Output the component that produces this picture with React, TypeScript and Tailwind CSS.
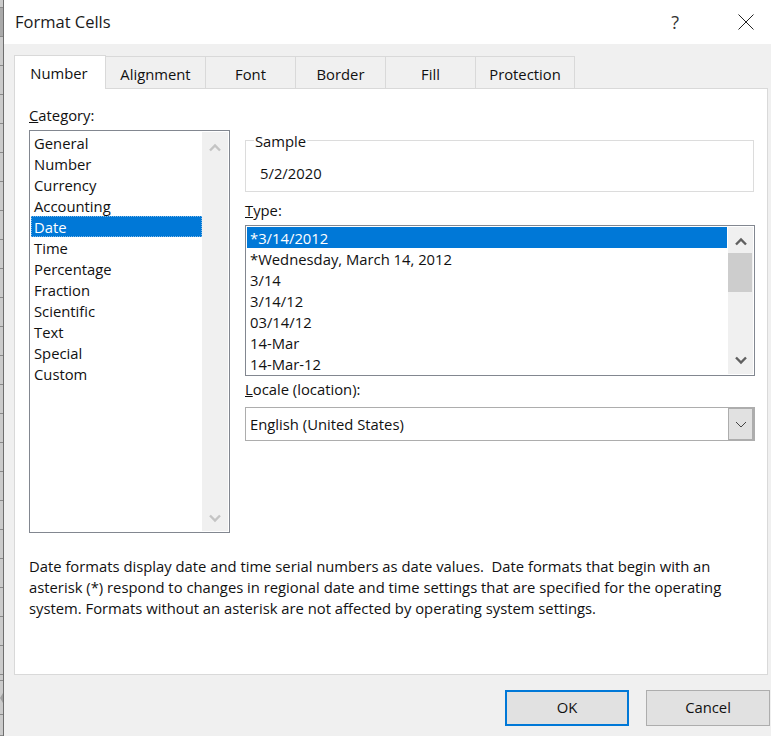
const categories = ['General', 'Number', 'Currency', 'Accounting', 'Date', 'Time', 'Percentage', 'Fraction', 'Scientific', 'Text', 'Special', 'Custom']
const types = ['*3/14/2012', '*Wednesday, March 14, 2012', '3/14', '3/14/12', '03/14/12', '14-Mar', '14-Mar-12']
const tabs = [
  { label: 'Alignment', width: 100 },
  { label: 'Font', width: 90 },
  { label: 'Border', width: 90 },
  { label: 'Fill', width: 90 },
  { label: 'Protection', width: 99 },
]
// row lines of the sheet that shows behind the dialog
const sheetRows = [8, ...Array(23).fill(29), 6, 34, 21]

function Chevron({ up, color }: { up?: boolean; color: string }) {
  return (
    <svg width="12" height="9" viewBox="0 0 12 9" fill="none" stroke={color} strokeWidth="2.4">
      <polyline points={up ? '1,7.5 6,2.5 11,7.5' : '1,1.5 6,6.5 11,1.5'} />
    </svg>
  )
}

export default function App() {
  return (
    <div className="flex w-[771px] h-[736px] overflow-hidden bg-[#f0f0f0] text-[14.8px] text-[#111] font-['Open_Sans',sans-serif]">
      <div className="w-[4px] shrink-0 flex flex-col bg-[#cbcbcb] border-r border-[#6e6e6e]">
        {sheetRows.map((h, i) => (
          <div
            key={i}
            className={i === 1 ? 'border-b border-[#8a8a8a] bg-[#aaaaaa] flex items-center' : 'border-b border-[#8a8a8a] flex items-center'}
            style={{ height: h }}
          >
            {i === 25 && (
              <svg width="3" height="10" viewBox="0 0 3 10" fill="#a0a0a0">
                <polygon points="0,5 3,0 3,10" />
              </svg>
            )}
          </div>
        ))}
      </div>

      <div className="flex-1 flex flex-col min-w-0">
        <div className="h-[44px] shrink-0 bg-white flex items-center pl-[11px]">
          <span className="text-[16.5px] text-[#1a1a1a]">Format Cells</span>
          <span className="ml-auto text-[18px] text-[#333] mr-[59px]">?</span>
          <svg className="mr-[17px]" width="16" height="16" viewBox="0 0 16 16" stroke="#222" strokeWidth="1" fill="none">
            <path d="M0.5 0.5 L15.5 15.5 M15.5 0.5 L0.5 15.5" />
          </svg>
        </div>

        <div className="flex-1 flex flex-col pl-[10px] pr-[3px]">
          <div className="flex h-[44px] items-end">
            <div className="relative z-10 -mb-px w-[92px] h-[34px] flex items-center justify-center bg-white border border-b-0 border-[#d9d9d9] pr-[2px] pt-[1px]">
              Number
            </div>
            {tabs.map((t) => (
              <div
                key={t.label}
                className="h-[32px] flex items-center justify-center bg-[#f0f0f0] border-t border-r border-[#d9d9d9] pt-[3px]"
                style={{ width: t.width }}
              >
                {t.label}
              </div>
            ))}
          </div>

          <div className="h-[587px] bg-white border border-[#d9d9d9] pl-[14px] pr-[12px] pt-[16px] flex flex-col">
            <div className="flex gap-[15px] h-[428px]">
              <div className="w-[201px] shrink-0 flex flex-col">
                <div className="h-[25px] leading-[20px]"><u>C</u>ategory:</div>
                <div className="flex-1 flex border border-[#828790] p-[1px] min-h-0">
                  <div className="flex-1">
                    {categories.map((c) =>
                      c === 'Date' ? (
                        <div key={c} className="h-[21px] leading-[23px] pl-[3px] bg-[#0078d7] text-white outline-1 outline-dotted -outline-offset-1 outline-[#7fb8e6]">
                          {c}
                        </div>
                      ) : (
                        <div key={c} className="h-[21px] leading-[23px] pl-[3px]">{c}</div>
                      )
                    )}
                  </div>
                  <div className="w-[26px] bg-[#f0f0f0] flex flex-col items-center justify-between pt-[11px] pb-[8px]">
                    <Chevron up color="#c4c4c4" />
                    <Chevron color="#c4c4c4" />
                  </div>
                </div>
              </div>

              <div className="flex-1 min-w-0 flex flex-col">
                <fieldset className="relative mt-[35px] h-[52px] mr-[1px] border border-[#dcdcdc] pl-[14px] pt-[22px]">
                  <span className="absolute left-[8px] -top-[10px] bg-white px-[1px] leading-[20px]">Sample</span>
                  <div className="leading-[20px]">5/2/2020</div>
                </fieldset>

                <div className="h-[33px] pt-[8px] leading-[21px]"><u>T</u>ype:</div>
                <div className="h-[151px] flex border border-[#828790] p-[1px]">
                  <div className="flex-1">
                    {types.map((t, i) => (
                      <div key={t} className={i === 0 ? 'h-[21px] leading-[23px] pl-[3px] bg-[#0078d7] text-white' : 'h-[21px] leading-[23px] pl-[3px]'}>
                        {t}
                      </div>
                    ))}
                  </div>
                  <div className="w-[25px] ml-[1px] bg-[#f0f0f0] flex flex-col">
                    <div className="h-[26px] flex items-center justify-center pt-[3px]">
                      <Chevron up color="#606060" />
                    </div>
                    <div className="h-[39px] bg-[#cdcdcd] mr-[1px]" />
                    <div className="flex-1 flex items-end justify-center pb-[9px]">
                      <Chevron color="#606060" />
                    </div>
                  </div>
                </div>

                <div className="h-[31px] pt-[3px] leading-[21px]"><u>L</u>ocale (location):</div>
                <div className="h-[34px] flex border border-[#adadad]">
                  <div className="flex-1 pl-[4px] leading-[32px]">English (United States)</div>
                  <div className="w-[26px] bg-[#e1e1e1] border-l border-r-2 border-y border-[#adadad] flex items-center justify-center">
                    <svg width="12" height="7" viewBox="0 0 12 7" fill="none" stroke="#444" strokeWidth="1">
                      <polyline points="1,1 6,6 11,1" />
                    </svg>
                  </div>
                </div>
              </div>
            </div>

            <p className="mt-[23px] leading-[21px] w-[720px]">
              Date formats display date and time serial numbers as date values.&nbsp; Date formats that begin with an asterisk (*) respond to changes in regional date and time settings that are specified for the operating system. Formats without an asterisk are not affected by operating system settings.
            </p>
          </div>

          <div className="flex-1 flex justify-end gap-[17px] pt-[15px]">
            <button className="w-[124px] h-[36px] bg-[#e1e1e1] border-2 border-[#0078d7] pb-[2px]">OK</button>
            <button className="w-[124px] h-[36px] bg-[#e1e1e1] border border-[#adadad] -mr-[2px] pb-[2px]">Cancel</button>
          </div>
        </div>
      </div>
    </div>
  )
}
